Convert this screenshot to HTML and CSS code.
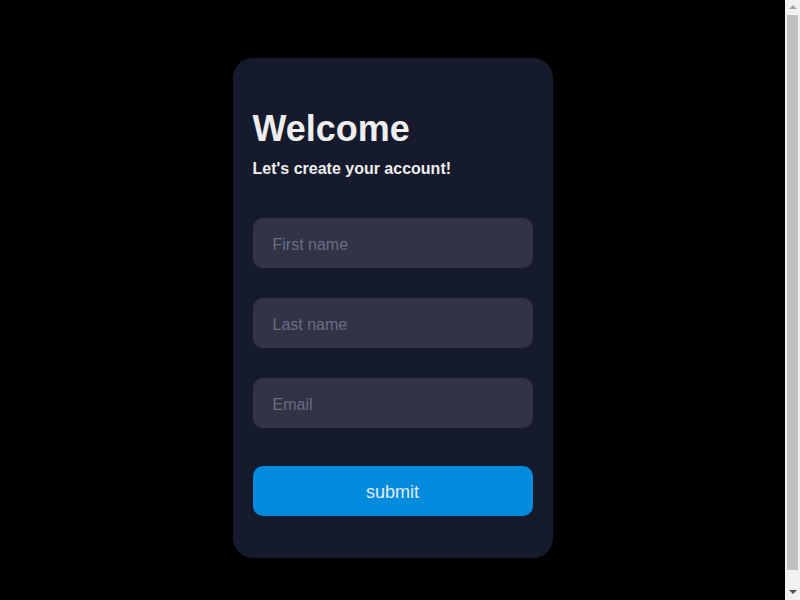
FILE: index.html
```html
<!DOCTYPE html>
<html>
<head>
<meta charset="utf-8">
<link rel="stylesheet" href="styles.css">
</head>
<body>
<main class="page">
  <form class="card">
    <h1 class="title">Welcome</h1>
    <p class="subtitle">Let's create your account!</p>
    <input class="field first" type="text" placeholder="First name">
    <input class="field" type="text" placeholder="Last name">
    <input class="field" type="email" placeholder="Email">
    <button class="submit" type="button">submit</button>
  </form>
</main>
<div class="scrollbar" aria-hidden="true">
  <svg class="arrow up" width="8" height="4" viewBox="0 0 8 4"><polygon points="0,4 8,4 4,0" fill="#a3a3a3"/></svg>
  <div class="thumb"></div>
  <svg class="arrow down" width="8" height="4" viewBox="0 0 8 4"><polygon points="0,0 8,0 4,4" fill="#505050"/></svg>
</div>
</body>
</html>
```
FILE: styles.css
```css
html, body {
  margin: 0;
  height: 100%;
  overflow: hidden;
  background: #000;
}
body {
  display: flex;
  font-family: "Liberation Sans", Arial, sans-serif;
}
.page {
  flex: 1;
  height: 100%;
  box-sizing: border-box;
  overflow-y: auto;
  padding: 8px;
}
.scrollbar {
  flex: none;
  width: 15px;
  height: 100%;
  background: #f1f1f1;
  display: flex;
  flex-direction: column;
  align-items: center;
}
.arrow {
  flex: none;
  display: block;
  margin: 5px 0 6px;
}
.thumb {
  width: 11px;
  flex: 1;
  margin-bottom: 15px;
  background: #c1c1c1;
}
.card {
  width: 320px;
  height: 500px;
  box-sizing: border-box;
  margin: 50px auto;
  padding: 50px 20px 42px;
  background: #161a2d;
  border-radius: 20px;
  display: flex;
  flex-direction: column;
}
.title {
  margin: 0;
  font-size: 36px;
  font-weight: bold;
  color: #eeeeee;
  line-height: 41px;
}
.subtitle {
  margin: 11px 0 0;
  font-size: 16px;
  font-weight: bold;
  color: #eeeeee;
  line-height: 18px;
}
.field {
  display: block;
  height: 50px;
  box-sizing: border-box;
  margin: 30px 0 0;
  padding: 4px 20px 0;
  border: none;
  outline: none;
  border-radius: 10px;
  background: #313347;
  color: #eee;
  font-family: "Liberation Sans", Arial, sans-serif;
  font-size: 16px;
}
.field.first {
  margin-top: 40px;
}
.field::placeholder {
  color: #6b6d82;
}
.submit {
  display: block;
  height: 50px;
  margin-top: 38px;
  padding: 2px 0 0;
  border: none;
  border-radius: 10px;
  background: #008bdc;
  color: #e4ecf4;
  font-family: "Liberation Sans", Arial, sans-serif;
  font-size: 18px;
}
```
